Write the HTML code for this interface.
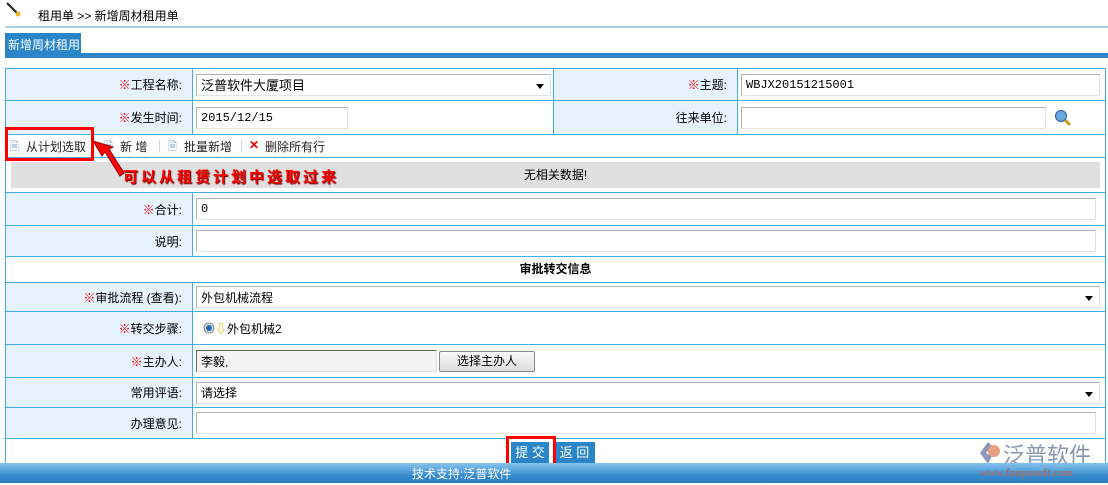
<!DOCTYPE html>
<html><head><meta charset="utf-8"><style>
*{box-sizing:border-box;margin:0;padding:0}
body{width:1108px;height:485px;background:#fff;font-family:"Liberation Sans","WenQuanYi Zen Hei","Noto Sans CJK SC",sans-serif;font-size:12px;color:#000;position:relative;overflow:hidden}
.a{position:absolute;white-space:nowrap}
.lab{background:#e6f2fd;text-align:right;padding-right:10px;border:1px solid #3cb0e2;display:flex;align-items:center;justify-content:flex-end}
.val{border:1px solid #3cb0e2;display:flex;align-items:center;padding-left:3px}
.inp{border:1px solid #b4b4b8;border-bottom-color:#e2e6ea;border-right-color:#dde;height:22px;background:#fff;display:flex;align-items:center;padding-left:4px;font-size:12px}
.mono{font-family:"Liberation Mono",monospace;font-size:12px}
.r{color:#f00}
.sel::after{content:"";position:absolute;right:6px;top:9px;border:4px solid transparent;border-top:5px solid #000}
.sel{position:relative}
.ic{color:#7aa0c8;font-size:11px}
</style></head><body>
<svg class="a" style="left:5px;top:1px" width="16" height="16"><line x1="2" y1="2" x2="12" y2="12" stroke="#222" stroke-width="2"/><circle cx="13" cy="13" r="2.5" fill="#e8b020"/></svg>
<div class="a" style="left:38px;top:7px;font-size:12px">租用单 &gt;&gt; 新增周材租用单</div>
<div class="a" style="left:5px;top:26px;width:1103px;height:2px;background:#a8d0ec"></div>
<div class="a" style="left:5px;top:33px;width:76px;height:21px;background:#2a86c8;color:#fff;font-size:12px;padding:3px 0 0 3px">新增周材租用</div>
<div class="a" style="left:5px;top:53px;width:1103px;height:5px;background:#2a86c8"></div>

<div class="a" style="left:5px;top:68px;width:1101px;height:396px;border:1px solid #3cb0e2;border-bottom:none"></div>
<div class="a lab" style="left:5px;top:68px;width:188px;height:33px"><span class="r">※</span>工程名称:</div>
<div class="a val" style="left:192px;top:68px;width:362px;height:33px"><div class="inp sel" style="width:355px;font-size:13px">泛普软件大厦项目</div></div>
<div class="a lab" style="left:553px;top:68px;width:185px;height:33px"><span class="r">※</span>主题:</div>
<div class="a val" style="left:737px;top:68px;width:369px;height:33px"><div class="inp mono" style="width:359px">WBJX20151215001</div></div>
<div class="a lab" style="left:5px;top:100px;width:188px;height:35px"><span class="r">※</span>发生时间:</div>
<div class="a val" style="left:192px;top:100px;width:362px;height:35px"><div class="inp mono" style="width:152px">2015/12/15</div></div>
<div class="a lab" style="left:553px;top:100px;width:185px;height:35px">往来单位:</div>
<div class="a val" style="left:737px;top:100px;width:369px;height:35px"><div class="inp" style="width:305px"></div>
<svg style="margin-left:8px" width="18" height="18"><circle cx="7" cy="7" r="5.5" fill="#6aa8e0" stroke="#2a5a9a"/><line x1="11" y1="11" x2="16" y2="16" stroke="#c89a20" stroke-width="3"/></svg></div>
<div class="a" style="left:5px;top:134px;width:1101px;height:24px;border:1px solid #3cb0e2"></div>
<div class="a" style="left:0;top:138px;color:#222">
<span class="a ic" style="left:10px">🗎</span><span class="a" style="left:26px">从计划选取</span>
<span class="a ic" style="left:104px">🗎</span><span class="a" style="left:120px">新 增</span><span class="a" style="left:158px;color:#ccc">|</span>
<span class="a ic" style="left:168px">🗎</span><span class="a" style="left:184px">批量新增</span><span class="a" style="left:240px;color:#ccc">|</span>
<b class="a" style="left:249px;color:#e00">✕</b><span class="a" style="left:265px">删除所有行</span></div>
<div class="a" style="left:5px;top:157px;width:1101px;height:36px;border:1px solid #3cb0e2"></div>
<div class="a" style="left:11px;top:162px;width:1089px;height:26px;background:#e0e0e0;text-align:center;line-height:26px;font-size:12px">无相关数据!</div>
<div class="a lab" style="left:5px;top:192px;width:188px;height:34px"><span class="r">※</span>合计:</div>
<div class="a val" style="left:192px;top:192px;width:914px;height:34px"><div class="inp mono" style="width:900px">0</div></div>
<div class="a lab" style="left:5px;top:225px;width:188px;height:32px">说明:</div>
<div class="a val" style="left:192px;top:225px;width:914px;height:32px"><div class="inp" style="width:900px"></div></div>
<div class="a" style="left:5px;top:256px;width:1101px;height:27px;border:1px solid #3cb0e2;text-align:center;line-height:25px;font-weight:bold">审批转交信息</div>
<div class="a lab" style="left:5px;top:282px;width:188px;height:30px"><span class="r">※</span>审批流程 (查看):</div>
<div class="a val" style="left:192px;top:282px;width:914px;height:30px"><div class="inp sel" style="width:904px">外包机械流程</div></div>
<div class="a lab" style="left:5px;top:311px;width:188px;height:34px"><span class="r">※</span>转交步骤:</div>
<div class="a val" style="left:192px;top:311px;width:914px;height:34px;padding-left:10px"><svg width="12" height="12"><circle cx="6" cy="6" r="5" fill="#ddd" stroke="#888"/><circle cx="6" cy="6" r="3" fill="#1a6ab8"/></svg><span style="color:#c8c000;font-weight:bold">⇩</span>外包机械2</div>
<div class="a lab" style="left:5px;top:344px;width:188px;height:34px"><span class="r">※</span>主办人:</div>
<div class="a val" style="left:192px;top:344px;width:914px;height:34px"><div class="inp" style="width:241px;background:#f4f4f4;border:1px solid #888;border-color:#666 #ddd #ddd #666">李毅,</div><div style="margin-left:2px;width:96px;height:21px;border:1px solid #888;border-radius:2px;background:linear-gradient(#fafafa,#ddd);text-align:center;line-height:19px">选择主办人</div></div>
<div class="a lab" style="left:5px;top:377px;width:188px;height:31px">常用评语:</div>
<div class="a val" style="left:192px;top:377px;width:914px;height:31px"><div class="inp sel" style="width:904px">请选择</div></div>
<div class="a lab" style="left:5px;top:407px;width:188px;height:32px">办理意见:</div>
<div class="a val" style="left:192px;top:407px;width:914px;height:32px"><div class="inp" style="width:900px"></div></div>
<div class="a" style="left:511px;top:442px;width:38px;height:21px;background:#2a86c8;color:#fff;text-align:center;line-height:21px;font-size:13px">提 交</div>
<div class="a" style="left:554px;top:442px;width:41px;height:21px;background:#2a86c8;color:#fff;text-align:center;line-height:21px;font-size:13px">返 回</div>
<div class="a" style="left:506px;top:436px;width:50px;height:34px;border:3px solid #f00"></div>
<svg class="a" style="left:978px;top:440px" width="24" height="26"><path d="M10 2 L2 13 L10 24 L14 16 L8 13 L14 6Z" fill="#8a9ab8"/><circle cx="16" cy="11" r="6" fill="#e8a080"/></svg>
<div class="a" style="left:1003px;top:438px;font-size:22px;color:#8a96b0">泛普软件</div>
<div class="a" style="left:0;top:463px;width:1108px;height:20px;background:linear-gradient(#88c4ec,#3a8ed0 60%,#2a7cc0)"></div>
<div class="a" style="left:412px;top:465px;color:#fff;font-size:12px">技术支持:泛普软件</div>
<div class="a" style="left:980px;top:467px;font-family:'Liberation Serif',serif;font-size:11px;color:#a07070;font-weight:bold">www.fanpusoft.com</div>
<div class="a" style="left:5px;top:127px;width:89px;height:34px;border:3px solid #f00"></div>
<svg class="a" style="left:90px;top:138px" width="40" height="45"><path d="M3 3 L12 18 L15 14 L30 38 L34 35 L19 11 L23 9Z" fill="#f00" stroke="#900"/></svg>
<div class="a" style="left:123px;top:166px;color:#f00;font-weight:bold;font-size:15px;letter-spacing:3px;text-shadow:1px 1px 1px #600">可以从租赁计划中选取过来</div>
</body></html>
